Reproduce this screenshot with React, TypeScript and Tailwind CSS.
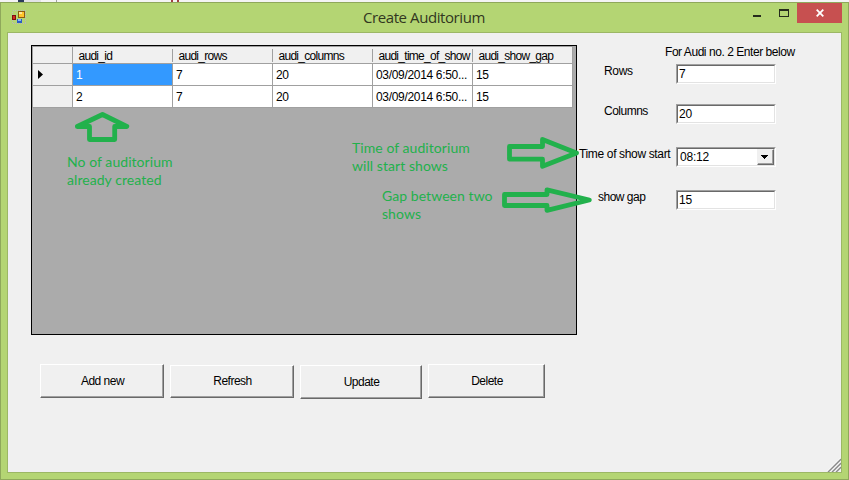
import type { ReactNode } from "react";

const columns = ["audi_id", "audi_rows", "audi_columns", "audi_time_of_show", "audi_show_gap"];

const rows = [
  ["1", "7", "20", "03/09/2014 6:50...", "15"],
  ["2", "7", "20", "03/09/2014 6:50...", "15"],
];

function AppIcon() {
  return (
    <svg width="14" height="14" viewBox="0 0 14 14" shapeRendering="crispEdges">
      <path d="M0.5 .5h13v13h-13z" fill="none" stroke="#b9b9b9" strokeDasharray="1 1" />
      <rect x="6" y="1" width="7" height="7" fill="#8d5a12" />
      <rect x="7" y="2" width="5" height="5" fill="#ffc52b" />
      <rect x="7" y="2" width="3" height="2" fill="#ffe896" />
      <rect x="0" y="5" width="4" height="5" fill="#7e1010" />
      <rect x="1" y="6" width="2" height="3" fill="#d22d20" />
      <rect x="5" y="9" width="5" height="4" fill="#2b5dc4" />
      <rect x="6" y="9" width="3" height="2" fill="#8ab5f7" />
    </svg>
  );
}

function TitleBar() {
  return (
    <header className="relative flex h-[29px] items-start justify-end pr-[6px]">
      <div className="absolute left-[11px] top-[7px]">
        <AppIcon />
      </div>
      <h1 className="absolute left-[362px] top-[4px] whitespace-nowrap font-['Open_Sans',sans-serif] text-[15px] leading-5 tracking-[-0.42px] text-[#32371f]">
        Create Auditorium
      </h1>
      <svg width="50" height="20" viewBox="0 0 50 20" shapeRendering="crispEdges">
        <rect x="6" y="12" width="8" height="2" fill="#262b1c" />
        <path d="M32 6h10v8h-10z M33 8v5h8v-5z" fill="#262b1c" fillRule="evenodd" />
      </svg>
      <div className="flex h-5 w-[45px] items-center justify-center bg-[#c75050]">
        <svg width="8" height="8" viewBox="0 0 8 8">
          <path d="M.7 .7l6.6 6.6M7.3 .7L.7 7.3" stroke="#fff" strokeWidth="1.8" />
        </svg>
      </div>
    </header>
  );
}

function DataGrid() {
  return (
    <section className="h-[290px] w-[546px] border border-black bg-[#ababab]">
      <div className="w-[541px] border-l border-t border-[#a0a0a0] leading-[13px]">
        <div className="flex h-[17px] border-b border-[#a0a0a0] bg-[#f0f0f0]">
          <div className="w-10 border-r border-[#a0a0a0]" />
          {columns.map((name, i) => (
            <div key={name} className="flex w-[100px] items-center pl-[5.5px]">
              <span className="w-[94px] whitespace-nowrap pt-[2px] tracking-[-0.72px]">{name}</span>
              <span className={`w-px shrink-0 bg-[#a0a0a0] ${i === columns.length - 1 ? "h-4" : "h-[13px]"}`} />
            </div>
          ))}
        </div>
        {rows.map((row, r) => (
          <div key={r} className="flex h-[22px] border-b border-[#a0a0a0] bg-white tracking-[-0.32px]">
            <div className="flex w-10 items-center border-r border-[#a0a0a0] bg-[#f0f0f0] pl-[5px]">
              {r === 0 && (
                <svg width="5" height="9" viewBox="0 0 5 9">
                  <path d="M0 0L5 4.5L0 9z" />
                </svg>
              )}
            </div>
            {row.map((cell, i) => (
              <div
                key={i}
                className={`flex w-[100px] items-center whitespace-nowrap border-r border-[#a0a0a0] pl-[3px] pt-px ${
                  r === 0 && i === 0 ? "bg-[#3399ff] text-white" : ""
                }`}
              >
                {cell}
              </div>
            ))}
          </div>
        ))}
      </div>
    </section>
  );
}

function PushButton({ children, size }: { children: ReactNode; size: string }) {
  return (
    <button
      className={`flex items-center justify-center border border-b-[#696969] border-l-white border-r-[#696969] border-t-white bg-[#f0f0f0] pl-px tracking-[-0.5px] shadow-[inset_-1px_-1px_0_#a0a0a0] ${size}`}
    >
      {children}
    </button>
  );
}

function Field({ label, value, pad, gap, combo }: { label: string; value: string; pad: string; gap: string; combo?: boolean }) {
  return (
    <div className={`flex h-5 ${gap}`}>
      <span className={`w-[99px] whitespace-nowrap pt-px leading-[13px] ${pad}`}>{label}</span>
      <div className="flex h-5 w-[100px] border border-b-white border-l-[#a0a0a0] border-r-white border-t-[#a0a0a0]">
        <div
          className={`flex flex-1 items-center border border-b-[#e3e3e3] border-l-[#696969] border-r-[#e3e3e3] border-t-[#696969] bg-white ${
            combo ? "pl-[2px] pt-px" : "pl-px"
          }`}
        >
          <span className="flex-1 leading-[15px] tracking-[-0.2px]">{value}</span>
          {combo && (
            <div className="-mt-px flex h-4 w-[17px] items-center border border-b-[#696969] border-l-[#f0f0f0] border-r-[#696969] border-t-[#f0f0f0] bg-[#f0f0f0] pl-[3px] shadow-[inset_-1px_-1px_0_#a0a0a0]">
              <svg width="7" height="4" viewBox="0 0 7 4" shapeRendering="crispEdges">
                <path d="M0 0h7v1H6v1H5v1H4v1H3V3H2V2H1V1H0z" />
              </svg>
            </div>
          )}
        </div>
      </div>
    </div>
  );
}

function Note({ place, children }: { place: string; children: ReactNode }) {
  return (
    <p className={`absolute whitespace-nowrap font-[Lato,sans-serif] text-[14px] leading-[18px] tracking-[0.06px] text-[#22b14c] ${place}`}>
      {children}
    </p>
  );
}

export default function App() {
  return (
    <div className="relative h-[480px] w-[849px] overflow-hidden bg-[#f4f4f4] font-['Liberation_Sans',Arial,sans-serif] text-[12px] text-black">
      <div className="flex h-[2px]">
        <div className="ml-[18px] w-[6px] bg-[#2b3a5b]" />
        <div className="w-[17px] bg-[#e2e3e6]" />
        <div className="ml-[15px] w-px bg-[#a0a0a0]" />
        <div className="ml-[114px] w-[2px] bg-[#a04040]" />
        <div className="ml-[4px] w-[2px] bg-[#a04040]" />
      </div>
      <div className="h-[478px] border border-[#8fa85b] bg-[#b4d573]">
        <TitleBar />
        <main className="relative ml-[6px] flex h-[441px] w-[835px] border border-[#9cb765] bg-[#f0f0f0]">
          <div className="ml-[23px] mt-[12px] w-[546px]">
            <DataGrid />
            <div className="ml-[9px] mt-[29px] flex gap-[6px]">
              <PushButton size="h-[34px] w-[124px]">Add new</PushButton>
              <PushButton size="mt-px h-[33px] w-[124px] pb-px">Refresh</PushButton>
              <PushButton size="mt-px h-[34px] w-[122px]">Update</PushButton>
              <PushButton size="h-[34px] w-[117px]">Delete</PushButton>
            </div>
          </div>
          <form className="flex w-[199px] flex-col pt-[13px] tracking-[-0.35px]">
            <span className="ml-[88px] h-[18px] whitespace-nowrap leading-[13px] tracking-[-0.45px]">
              For Audi no. 2 Enter below
            </span>
            <Field label="Rows" value="7" pad="pl-[27px]" gap="" />
            <Field label="Columns" value="20" pad="pl-[27px] tracking-[-0.5px]" gap="mt-5" />
            <Field label="Time of show start" value="08:12" pad="pl-[2px]" gap="mt-[23px]" combo />
            <Field label="show gap" value="15" pad="pl-[21px] tracking-[-0.5px]" gap="mt-[23px]" />
          </form>
          <svg className="absolute bottom-0 right-0" width="14" height="14" viewBox="0 0 14 14">
            <path d="M1 14L14 1M5 14L14 5M9 14L14 9" stroke="#8c8c8c" strokeWidth="1.6" />
            <path d="M0 13.5L13.5 0M4 13.5L14 3.5M8 13.5L14 7.5" stroke="#fff" strokeWidth=".8" />
          </svg>
        </main>
      </div>
      <Note place="left-[67px] top-[153px]">
        No of auditorium
        <br />
        already created
      </Note>
      <Note place="left-[352px] top-[139px]">
        Time of auditorium
        <br />
        will start shows
      </Note>
      <Note place="left-[382px] top-[187px]">
        Gap between two
        <br />
        shows
      </Note>
      <svg className="pointer-events-none absolute inset-0" width="849" height="480" viewBox="0 0 849 480">
        <g fill="none" stroke="#22b14c" strokeWidth="4.8" strokeLinejoin="round">
          <path d="M102.5 114.5L126.8 126.5H114.7V139.5H89.5V126.5H77.3z" />
          <path d="M509.5 146.5H542.5V139.5L576.5 153L542.5 166.3V159.2H509.5z" />
          <path d="M504.5 194.5H547V189.8L589.3 200L547 210.3V205.5H504.5z" />
        </g>
      </svg>
    </div>
  );
}
